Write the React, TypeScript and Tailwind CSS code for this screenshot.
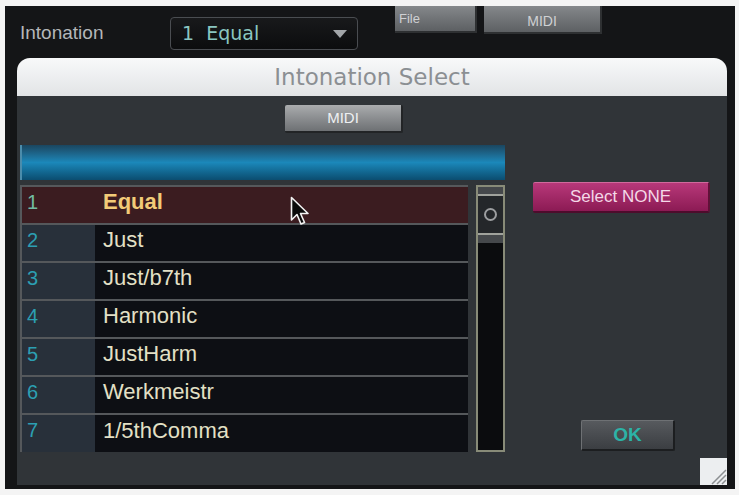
import React from "react";

const rows = [
  { n: "1", name: "Equal" },
  { n: "2", name: "Just" },
  { n: "3", name: "Just/b7th" },
  { n: "4", name: "Harmonic" },
  { n: "5", name: "JustHarm" },
  { n: "6", name: "Werkmeistr" },
  { n: "7", name: "1/5thComma" },
];

function Cursor() {
  return (
    <svg width="20" height="32" viewBox="0 0 20 32" className="absolute left-[268px] top-[9px]">
      <path
        d="M1.5 1.5 L1.5 24 L7 18.5 L11 28 L14.5 26.5 L10.5 17.5 L18 17.5 Z"
        fill="#0a0a0a"
        stroke="#f2f2f2"
        strokeWidth="1.6"
        strokeLinejoin="round"
      />
    </svg>
  );
}

export default function App() {
  return (
    <div
      className="w-[739px] h-[495px] bg-[#f4f4f4] pt-[6px] pl-[5px] overflow-hidden"
      style={{ fontFamily: '"Liberation Sans", Arial, sans-serif' }}
    >
      <div className="w-[730px] h-[483px] bg-[#141517] flex flex-col">
        {/* top bar */}
        <div className="h-[52px] flex items-start shrink-0">
          <div className="w-[150px] ml-[15px] mt-[16px] text-[19px] leading-[22px] text-[#b4b7ba]">Intonation</div>
          <div className="mt-[11px] w-[188px] h-[33px] rounded-[4px] border border-[#4a4d51] bg-gradient-to-b from-[#18191b] to-[#0c0d0e] flex items-center pl-[11px] pr-[10px]">
            <span
              className="text-[19px] leading-none text-[#8ac6c1]"
              style={{ fontFamily: '"DejaVu Sans", sans-serif' }}
            >
              1&nbsp;&nbsp;Equal
            </span>
            <svg width="14" height="8" viewBox="0 0 14 8" className="ml-auto">
              <path d="M0 0 H14 L7 8 Z" fill="#a2a6a9" />
            </svg>
          </div>
          <div className="ml-[37px] w-[82px] h-[27px] bg-gradient-to-b from-[#85888b] to-[#5d6063] border-r-2 border-b-2 border-[#2e3032] pl-[4px] pt-[6px] text-[13px] leading-none text-[#cfd1d3]">
            File
          </div>
          <div className="ml-[7px] w-[118px] h-[28px] bg-gradient-to-b from-[#85888b] to-[#5d6063] border-r-2 border-b-2 border-[#2e3032] flex justify-center pt-[8px] text-[14px] leading-none text-[#cfd1d3]">
            MIDI
          </div>
        </div>

        {/* dialog */}
        <div className="ml-[12px] w-[710px] h-[427px] flex flex-col">
          <div className="h-[38px] shrink-0 rounded-t-[13px] bg-gradient-to-b from-[#f8f9fa] to-[#e2e4e6] flex items-center justify-center">
            <span
              className="text-[23px] leading-none text-[#8b8f93]"
              style={{ fontFamily: '"DejaVu Sans", sans-serif' }}
            >
              Intonation Select
            </span>
          </div>

          <div className="flex-1 bg-[#303438] flex flex-col pt-[9px]">
            <div className="ml-[268px] w-[118px] h-[28px] rounded-[2px] bg-gradient-to-b from-[#aaacae] to-[#6e7174] border-b-2 border-r-2 border-[#222426] flex items-center justify-center text-[15px] text-[#eef0f2]">
              MIDI
            </div>

            <div className="mt-[12px] flex h-[307px]">
              <div className="ml-[3px] w-[485px] flex flex-col">
                <div className="h-[35px] border-l-2 border-[#4b8cab] bg-gradient-to-b from-[#1a4660] via-[#1b88ba] to-[#0b4d70]" />
                <div className="mt-[5px] flex">
                  <div className="relative w-[450px] border-t-2 border-l-2 border-[#55585b]">
                    {rows.map((r, i) => {
                      const sel = i === 0;
                      return (
                        <div
                          key={r.n}
                          className={`flex ${i < 6 ? "h-[38px] border-b-2 border-[#55585b]" : "h-[37px]"} ${
                            sel ? "bg-[#3b1c20]" : ""
                          }`}
                        >
                          <div
                            className={`w-[73px] flex items-center pl-[5px] pb-[7px] text-[20px] ${
                              sel ? "text-[#72bca3]" : "bg-[#28303a] text-[#2c9fb2]"
                            }`}
                          >
                            {r.n}
                          </div>
                          <div
                            className={`flex-1 flex items-center pl-[8px] pb-[7px] text-[22px] ${
                              sel ? "font-bold text-[#f2cb78]" : "bg-[#0d0f14] text-[#e3e0c6]"
                            }`}
                          >
                            {r.name}
                          </div>
                        </div>
                      );
                    })}
                    <Cursor />
                  </div>
                  <div className="ml-[8px] w-[29px] h-[267px] border-2 border-[#888b78] bg-[#0b0c0e] flex flex-col">
                    <div className="h-[7px] bg-[#45484b]" />
                    <div className="h-[41px] border-y-2 border-[#a0a29c] bg-[#24272a] flex items-center justify-center">
                      <div className="w-[13px] h-[13px] rounded-full border-[2.5px] border-[#9c9ea0]" />
                    </div>
                    <div className="h-[8px] bg-[#45484b]" />
                  </div>
                </div>
              </div>

              <div className="ml-[28px] flex flex-col">
                <div className="mt-[37px] w-[177px] h-[31px] rounded-[2px] bg-gradient-to-b from-[#b8387a] to-[#8c1a54] border-t border-[#d06a9c] border-b-2 border-b-[#4d0c2c] border-r-2 border-r-[#5f1238] flex items-center justify-center text-[17px] text-[#f4d8e7]">
                  Select NONE
                </div>
                <div className="mt-auto mb-[1px] ml-[48px] w-[94px] h-[31px] rounded-[2px] bg-gradient-to-b from-[#575a5e] to-[#3b3e42] border-t border-l border-[#6e7174] border-b-2 border-r-2 border-b-[#1c1e20] border-r-[#1c1e20] flex items-center justify-center text-[19px] font-bold text-[#2cb3a7]">
                  OK
                </div>
              </div>
            </div>

            <div className="mt-auto flex justify-end">
              <svg width="27" height="27" viewBox="0 0 27 27">
                <rect width="27" height="27" fill="#eceef0" />
                <path d="M26 12 L12 26 M26 17 L17 26 M26 22 L22 26" stroke="#8c8f92" strokeWidth="1.5" />
              </svg>
            </div>
          </div>
        </div>
      </div>
    </div>
  );
}
